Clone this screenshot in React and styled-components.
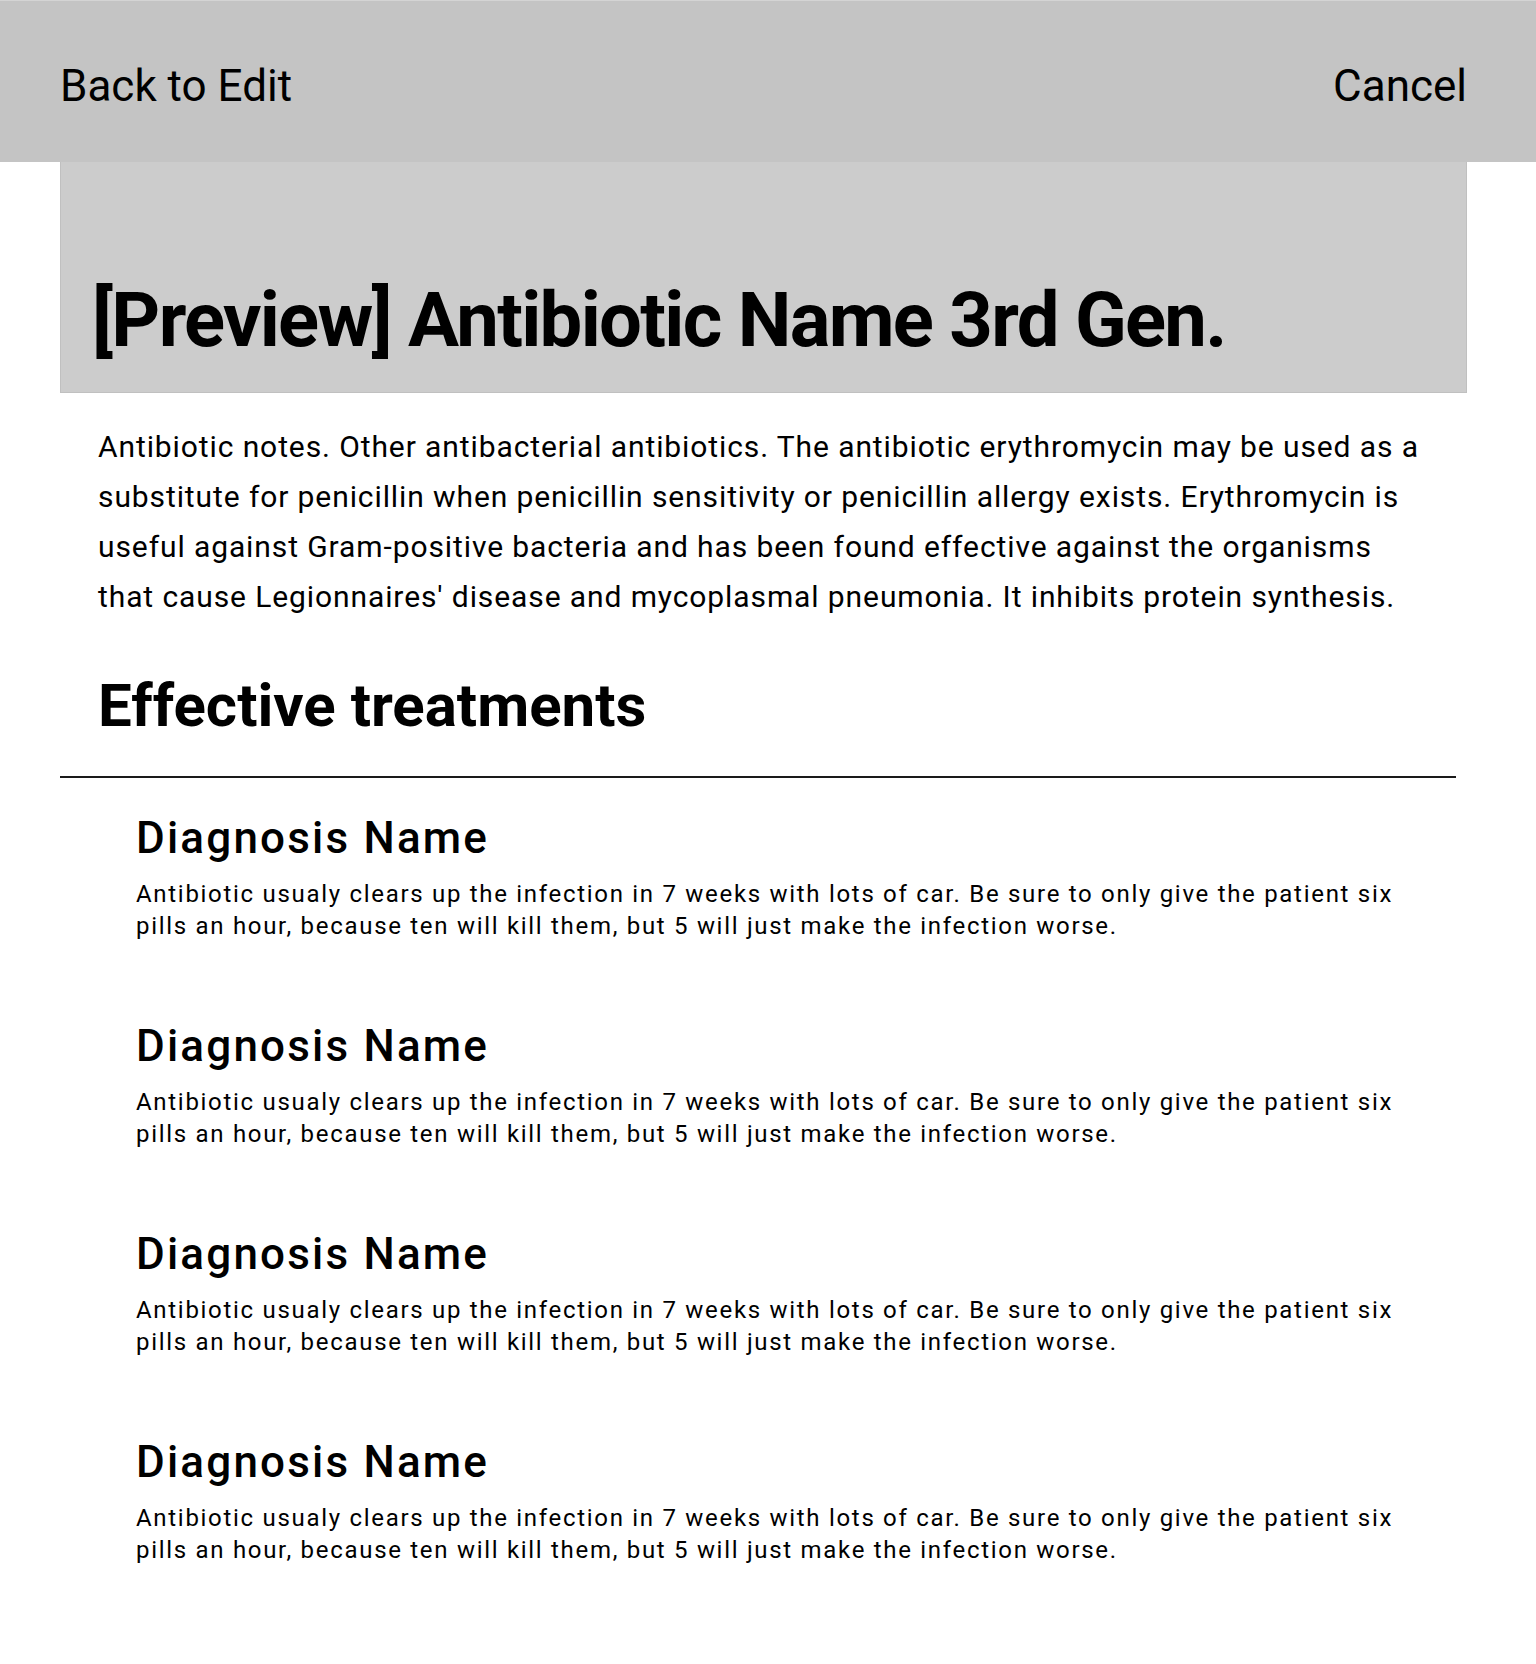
import React from 'react';
import styled, { createGlobalStyle } from 'styled-components';

const GlobalStyle = createGlobalStyle`
  * {
    box-sizing: border-box;
  }
  body {
    margin: 0;
    background: #ffffff;
    color: #000000;
    font-family: Roboto, "Liberation Sans", Arial, sans-serif;
  }
`;

const TopBar = styled.header`
  display: flex;
  justify-content: space-between;
  align-items: center;
  height: 162px;
  padding: 8px 69px 0 60px;
  background-color: #c4c4c4;
  border-top: 1px solid #d4d4d4;
`;
const BarLink = styled.a`
  font-size: 44px;
  font-weight: 400;
  color: #000;
  text-decoration: none;
  cursor: pointer;
`;

const Page = styled.main`
  padding: 0 69px 60px 60px;
`;
const PreviewBanner = styled.div`
  display: flex;
  align-items: flex-end;
  height: 231px;
  padding: 0 30px 27px 31px;
  background-color: #cccccc;
  border: 1px solid #c0c0c0;
  border-top: none;
`;
const Title = styled.h1`
  margin: 0;
  font-size: 76px;
  font-weight: 700;
  letter-spacing: -1.7px;
  line-height: normal;
`;
const Notes = styled.p`
  margin: 29px 0 0;
  padding: 0 42px 0 38px;
  font-size: 30px;
  letter-spacing: 0.9px;
  line-height: 50px;
`;
const SectionTitle = styled.h2`
  margin: 48px 0 0;
  padding: 0 38px;
  font-size: 60px;
  font-weight: 700;
  line-height: normal;
`;
const Divider = styled.hr`
  margin: 35px 11px 0 0;
  border: none;
  border-top: 2px solid #1a1a1a;
`;
const TreatmentList = styled.div`
  display: flex;
  flex-direction: column;
  padding: 34px 42px 0 76px;
`;
const Treatment = styled.section`
  height: 208px;
`;
const DiagnosisName = styled.h3`
  margin: 0;
  font-size: 44px;
  font-weight: 500;
  letter-spacing: 2.2px;
  line-height: normal;
`;
const DiagnosisText = styled.p`
  margin: 14px 0 0;
  font-size: 24px;
  letter-spacing: 1.7px;
  line-height: 32px;
`;

const treatments = [1, 2, 3, 4].map(id => ({
  id,
  name: 'Diagnosis Name',
  text: 'Antibiotic usualy clears up the infection in 7 weeks with lots of car. Be sure to only give the patient six pills an hour, because ten will kill them, but 5 will just make the infection worse.',
}));

const App = () => (
  <>
    <GlobalStyle />
    <TopBar>
      <BarLink>Back to Edit</BarLink>
      <BarLink>Cancel</BarLink>
    </TopBar>
    <Page>
      <PreviewBanner>
        <Title>[Preview] Antibiotic Name 3rd Gen.</Title>
      </PreviewBanner>
      <Notes>
        Antibiotic notes. Other antibacterial antibiotics. The antibiotic erythromycin may be used as a
        substitute for penicillin when penicillin sensitivity or penicillin allergy exists. Erythromycin is
        useful against Gram-positive bacteria and has been found effective against the organisms that
        cause Legionnaires' disease and mycoplasmal pneumonia. It inhibits protein synthesis.
      </Notes>
      <SectionTitle>Effective treatments</SectionTitle>
      <Divider />
      <TreatmentList>
        {treatments.map(t => (
          <Treatment key={t.id}>
            <DiagnosisName>{t.name}</DiagnosisName>
            <DiagnosisText>{t.text}</DiagnosisText>
          </Treatment>
        ))}
      </TreatmentList>
    </Page>
  </>
);

export default App;
